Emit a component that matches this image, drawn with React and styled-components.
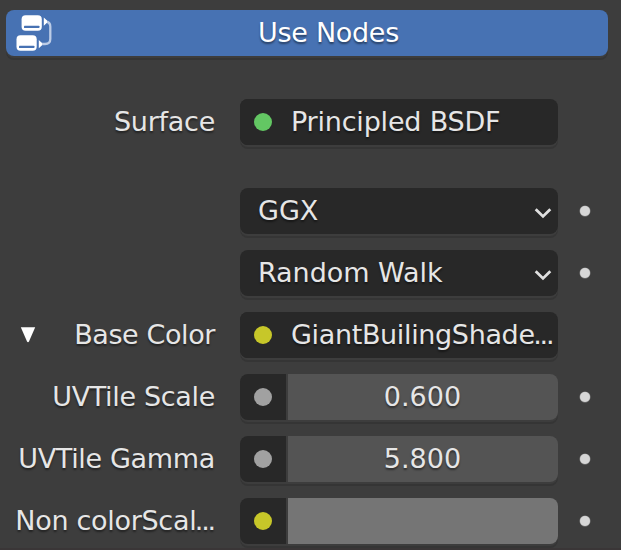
import React from "react";
import styled, { createGlobalStyle } from "styled-components";

const Global = createGlobalStyle`
  * { box-sizing: border-box; }
  body { margin: 0; background: #3d3d3d; overflow: hidden; }
`;

const Panel = styled.main`
  width: 621px;
  height: 550px;
  padding: 10px 0 0 6px;
  overflow: hidden;
  background: #3d3d3d;
  border-bottom: 2px solid #3a3637;
  color: #e6e6e6;
  font: 27px/46px "DejaVu Sans", sans-serif;
  white-space: pre;
`;

const bevel = "0 2px 0 #3d3d3d, 0 4px 0 #353535";

const UseNodes = styled.button`
  display: grid;
  grid-template-columns: 46px 1fr 3px;
  align-items: center;
  width: 602px;
  height: 46px;
  margin: 0 0 43px;
  padding: 0;
  border: 0;
  border-radius: 8px;
  background: #4772b3;
  box-shadow: ${bevel};
  color: #fff;
  font: inherit;
`;

const Caption = styled.span`
  display: block;
  height: 46px;
  letter-spacing: ${(p) => p.$tracking || 0}px;
  text-shadow: 0 2px 2px rgba(0, 0, 0, 0.45);
`;

const Ellipsis = styled.span`
  margin-left: -1.5px;
  letter-spacing: -2.2px;
`;

const Rows = styled.div`
  display: flex;
  flex-direction: column;
  gap: 16px;
`;

const Row = styled.div`
  display: grid;
  grid-template-columns: 44px 166px 318px 54px;
  align-items: center;
  height: 46px;
  margin-bottom: ${(p) => (p.$spaced ? "27px" : "0")};
`;

const Label = styled.label`
  display: flex;
  justify-content: flex-end;
  height: 46px;
  padding-right: ${(p) => (p.$clipped ? "2px" : "1px")};
`;

const Field = styled.div`
  display: flex;
  align-items: center;
  width: 318px;
  height: 46px;
  margin-left: 24px;
  border-radius: 8px;
  background: ${(p) => (p.$split ? "transparent" : "#282828")};
  box-shadow: ${bevel};
`;

const Socket = styled.span`
  display: flex;
  flex: none;
  align-items: center;
  justify-content: center;
  width: 46px;
  height: 46px;
  margin-right: ${(p) => (p.$split ? "2px" : "5px")};
  border-radius: 8px 0 0 8px;
  background: #282828;

  &::before {
    content: "";
    width: 18px;
    height: 18px;
    border-radius: 50%;
    background: ${(p) => p.$color};
  }
`;

const Value = styled.div`
  flex: 1;
  height: 46px;
  padding-right: 1px;
  border-radius: 0 8px 8px 0;
  background: ${(p) => p.$fill};
  text-align: center;
`;

const MenuText = styled.div`
  flex: 1;
  height: 46px;
  padding-left: 18px;
`;

const Chevron = styled.svg`
  flex: none;
  width: 18px;
  height: 14px;
  margin: 3px 6px 0 0;
`;

const Keyframe = styled.i`
  width: 10px;
  height: 10px;
  margin-left: 46px;
  border-radius: 50%;
  background: #d6d6d6;
  box-shadow: 0 0 0 0.5px rgba(214, 214, 214, 0.5);
`;

const Triangle = styled.svg`
  display: block;
  width: 16px;
  height: 17px;
  margin: 0 0 2px 14px;
`;

const NodeGlyph = styled.svg`
  width: 40px;
  height: 40px;
  margin-left: 8px;
`;

const NodeIcon = () => (
  <NodeGlyph viewBox="0 0 40 40">
    <path d="M32 8.5 C35 9 36.3 11 36.3 13.5 V26 C36.3 29.5 34.5 31 31 31 H27" fill="none" stroke="#bccce6" strokeWidth="2.3" />
    <rect x="7.6" y="2.2" width="20.2" height="15.6" rx="4" fill="#fff" />
    <rect x="10" y="12.7" width="15.4" height="2.3" rx="0.6" fill="#4772b3" />
    <rect x="2.5" y="22.2" width="20.2" height="15.6" rx="4" fill="#fff" />
    <rect x="5" y="32.7" width="15.4" height="2.3" rx="0.6" fill="#4772b3" />
    <path d="M29.8 4.6 L33 7.6 V9.8 L29.8 12.8 Z M24.8 27 L28 30 V32.2 L24.8 35.2 Z" fill="#fff" />
  </NodeGlyph>
);

const rows = [
  { label: "Surface", socket: "#63c763", text: "Principled BSDF", labelTracking: -0.25, tracking: -0.2, spaced: true },
  { menu: "GGX", key: true },
  { menu: "Random Walk", tracking: -0.05, key: true },
  { label: "Base Color", socket: "#c7c729", text: "GiantBuilingShade...", labelTracking: -0.4, tracking: -0.35, open: true },
  { label: "UVTile Scale", socket: "#a1a1a1", value: "0.600", fill: "#545454", labelTracking: -0.33, key: true },
  { label: "UVTile Gamma", socket: "#a1a1a1", value: "5.800", fill: "#545454", labelTracking: -0.33, key: true },
  { label: "Non colorScal...", socket: "#c7c729", value: "", fill: "#757575", labelTracking: -0.3, key: true },
];

function Text({ children = "", tracking }) {
  const clipped = children.endsWith("...");
  return (
    <Caption $tracking={tracking}>
      {clipped ? children.slice(0, -3) : children}
      {clipped && <Ellipsis>...</Ellipsis>}
    </Caption>
  );
}

function Property({ row }) {
  const split = row.value !== undefined;
  return (
    <Row $spaced={row.spaced}>
      <span>
        {row.open && (
          <Triangle viewBox="0 0 16 17">
            <path d="M0.8 1.2 H15.2 L9 15.4 Q8 17 7 15.4 Z" fill="#fff" />
          </Triangle>
        )}
      </span>
      <Label $clipped={row.label?.endsWith("...")}>
        <Text tracking={row.labelTracking}>{row.label}</Text>
      </Label>
      <Field $split={split}>
        {row.socket && <Socket $split={split} $color={row.socket} />}
        {row.text && <Text tracking={row.tracking}>{row.text}</Text>}
        {split && <Value $fill={row.fill}><Text>{row.value}</Text></Value>}
        {row.menu && (
          <>
            <MenuText><Text tracking={row.tracking}>{row.menu}</Text></MenuText>
            <Chevron viewBox="0 0 18 14">
              <path d="M1.7 3.3 L9 10.4 L16.3 3.3" fill="none" stroke="#e0e0e0" strokeWidth="2.8" />
            </Chevron>
          </>
        )}
      </Field>
      {row.key && <Keyframe />}
    </Row>
  );
}

export default function App() {
  return (
    <>
      <Global />
      <Panel>
        <UseNodes><NodeIcon /><Text tracking={-0.3}>Use Nodes</Text></UseNodes>
        <Rows>{rows.map((row, i) => <Property key={i} row={row} />)}</Rows>
      </Panel>
    </>
  );
}
